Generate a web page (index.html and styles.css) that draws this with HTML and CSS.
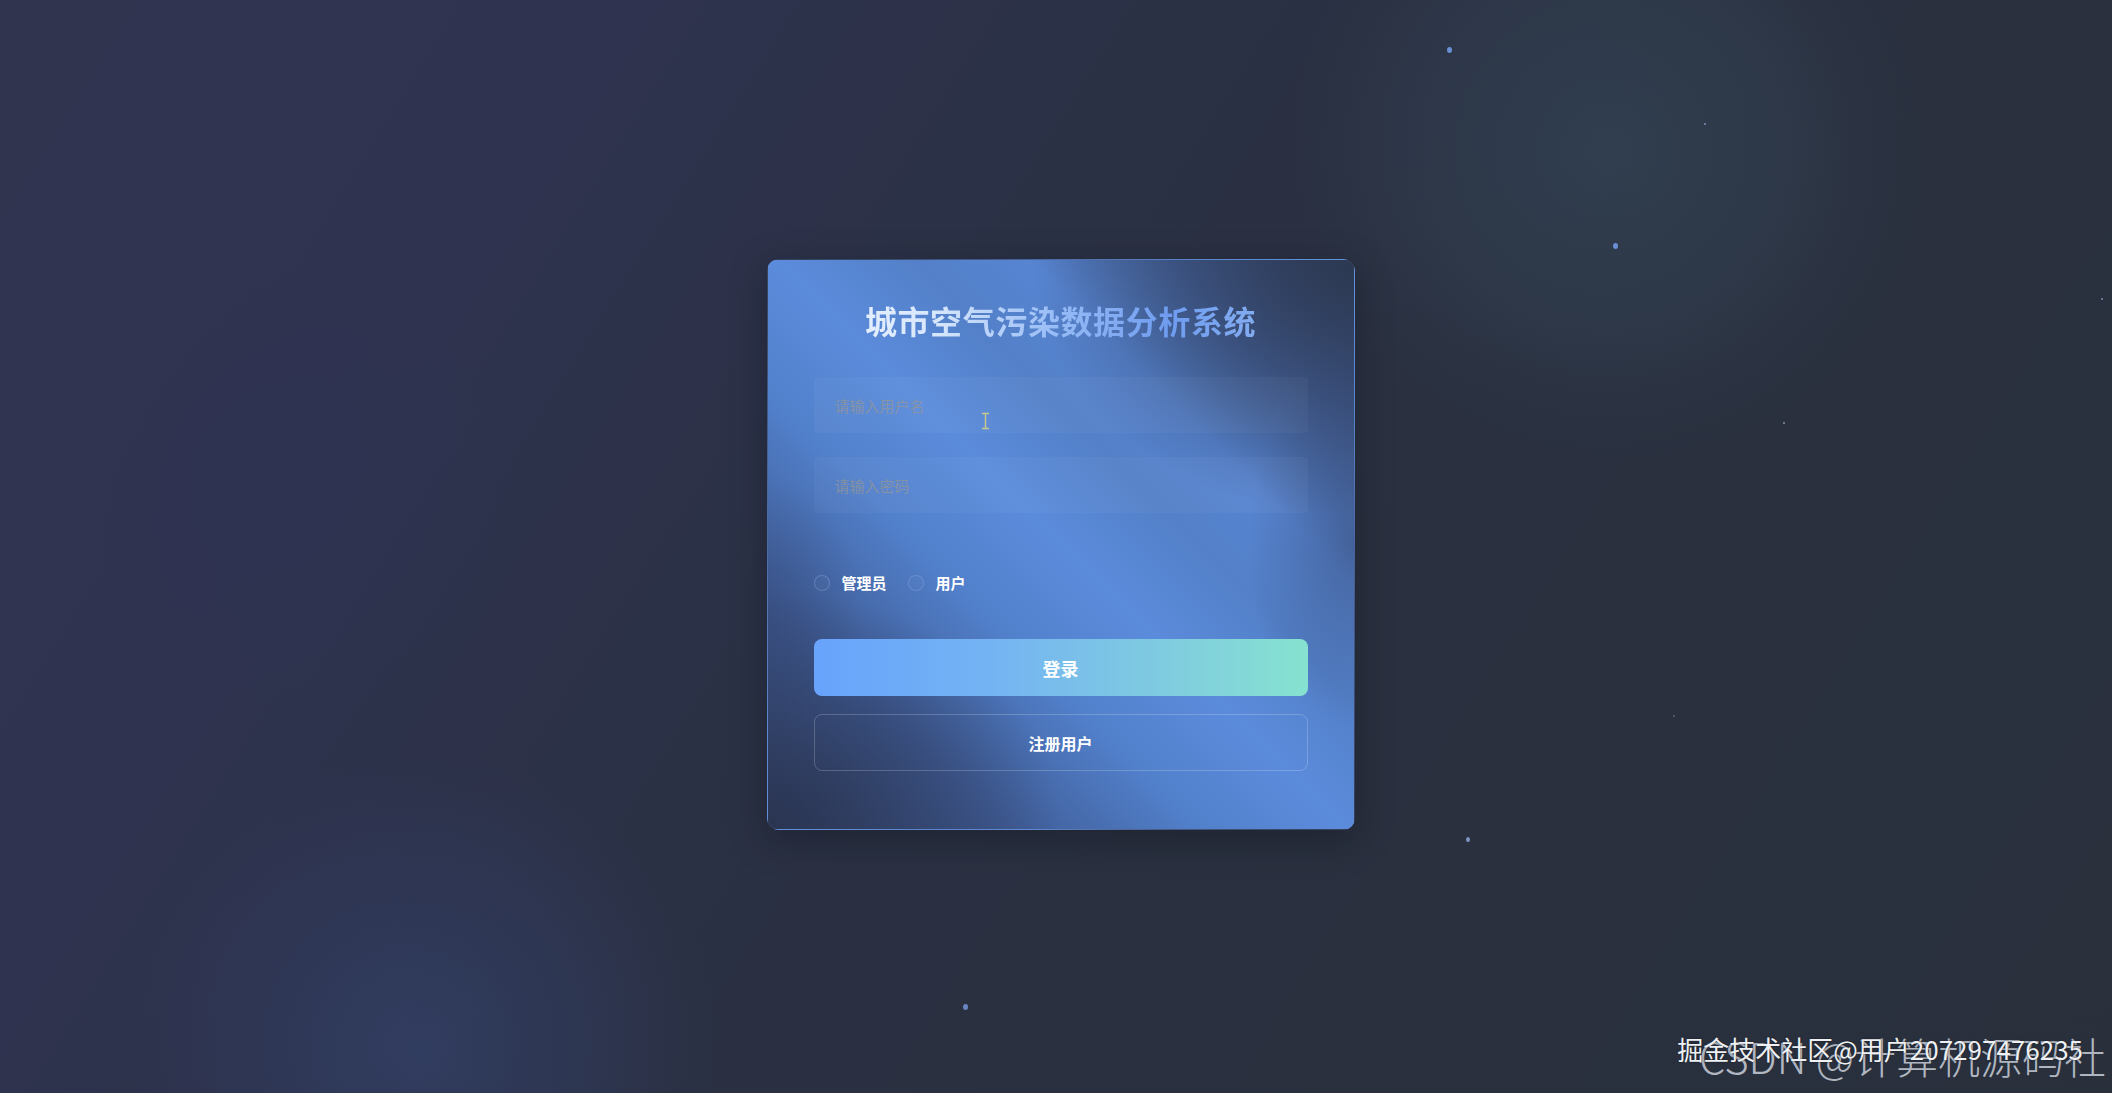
FILE: index.html
```html
<!DOCTYPE html>
<html lang="zh-CN">
<head>
<meta charset="utf-8">
<title>城市空气污染数据分析系统</title>
<link rel="stylesheet" href="styles.css">
</head>
<body>
<div class="particles">
  <span class="dot d1"></span>
  <span class="dot d2"></span>
  <span class="dot d3"></span>
  <span class="dot d4"></span>
  <span class="dot d5"></span>
  <span class="dot d6"></span>
  <span class="dot d7"></span>
  <span class="dot d8"></span>
</div>

<main class="card">
  <h1 class="title">城市空气污染数据分析系统</h1>
  <form class="form">
    <div class="field"><input class="input" type="text" placeholder="请输入用户名"></div>
    <div class="field field-second"><input class="input" type="password" placeholder="请输入密码"></div>
    <div class="roles">
      <label class="role"><span class="radio"></span><span class="role-text">管理员</span></label>
      <label class="role"><span class="radio"></span><span class="role-text">用户</span></label>
    </div>
    <button type="button" class="btn btn-login">登录</button>
    <button type="button" class="btn btn-register">注册用户</button>
  </form>
  <svg class="ibeam" width="9" height="18" viewBox="0 0 9 18">
    <path d="M1 1.5h7M1 16.5h7M4.5 1.5v15" stroke="#c9c98e" stroke-width="1.4" fill="none"/>
  </svg>
</main>

<div class="watermark">
  <span class="wm-csdn">CSDN @计算机源码社</span>
  <span class="wm-juejin">掘金技术社区@用户207297476235</span>
</div>
</body>
</html>
```
FILE: styles.css
```css
* { box-sizing: border-box; }

html, body {
  margin: 0;
  height: 100%;
}

body {
  min-height: 100vh;
  overflow: hidden;
  display: flex;
  align-items: center;
  justify-content: center;
  position: relative;
  font-family: "Noto Sans CJK SC", "Noto Sans", sans-serif;
  background:
    radial-gradient(circle at 1610px 150px, rgba(62, 92, 112, 0.32) 0, rgba(58, 84, 104, 0.22) 170px, rgba(50, 70, 90, 0.08) 270px, transparent 320px),
    radial-gradient(circle at 420px 1050px, rgba(56, 76, 130, 0.42) 0, rgba(52, 68, 118, 0.22) 180px, rgba(50, 60, 100, 0.08) 260px, transparent 300px),
    radial-gradient(circle at 300px 490px, rgba(44, 50, 84, 0.4) 0, rgba(44, 50, 84, 0.15) 150px, transparent 220px),
    linear-gradient(122deg, #30344f 0%, #2f3350 20%, #2b3145 42%, #2a303f 62%, #29303c 100%);
}

.particles {
  position: absolute;
  inset: 0;
  pointer-events: none;
}

.dot {
  position: absolute;
  border-radius: 50%;
  background: #6b8fd6;
}
.d1 { left: 1447px; top: 47px; width: 5px; height: 6px; }
.d2 { left: 1704px; top: 123px; width: 2px; height: 2px; background: #7d8fb0; }
.d3 { left: 1613px; top: 243px; width: 5px; height: 6px; }
.d4 { left: 2101px; top: 298px; width: 2px; height: 2px; background: #7d8fb0; }
.d5 { left: 1783px; top: 422px; width: 2px; height: 2px; background: #7d8fb0; }
.d6 { left: 1673px; top: 715px; width: 2px; height: 2px; background: #5b6580; }
.d7 { left: 1466px; top: 837px; width: 4px; height: 5px; background: #7e94c4; }
.d8 { left: 963px; top: 1004px; width: 5px; height: 6px; background: #6a85c2; }

.card {
  position: relative;
  width: 588px;
  height: 571px;
  margin-left: 9px;
  margin-top: -4px;
  padding: 39px 46px 58px 46px;
  border-radius: 12px;
  border: 1px solid rgba(255, 255, 255, 0.05);
  box-shadow: 0 10px 36px rgba(10, 14, 24, 0.35);
  background:
    radial-gradient(ellipse 55% 45% at 100% 0%, rgba(44, 56, 80, 0.95) 0%, rgba(46, 60, 90, 0.55) 50%, transparent 100%),
    radial-gradient(ellipse 50% 42% at 0% 100%, rgba(42, 52, 80, 0.95) 0%, rgba(44, 56, 88, 0.5) 50%, transparent 100%),
    radial-gradient(ellipse 18% 32% at 100% 50%, rgba(52, 70, 110, 0.5), transparent 100%),
    radial-gradient(ellipse 16% 24% at 0% 62%, rgba(52, 72, 118, 0.45), transparent 100%),
    linear-gradient(45deg, #34446c 0%, #3f5b95 20%, #5281cc 38%, #5b8bdb 50%, #5380c8 62%, #5785d2 72%, #46649f 86%, #34466e 100%);
}

.title {
  margin: 0;
  text-align: center;
  font-size: 32px;
  line-height: 42px;
  font-weight: 700;
  letter-spacing: 0.6px;
  background: linear-gradient(90deg, #eef5ff 0%, #d6e6fc 25%, #95baf5 50%, #6f9cf0 72%, #8fb6f0 100%);
  -webkit-background-clip: text;
  background-clip: text;
  color: transparent;
}

.form {
  display: flex;
  flex-direction: column;
  margin-top: 36px;
}

.field { height: 56px; }
.field-second { margin-top: 24px; }

.input {
  width: 100%;
  height: 56px;
  border: none;
  outline: none;
  border-radius: 4px;
  padding: 0 21px;
  background: rgba(255, 255, 255, 0.035);
  color: #fff;
  font-family: inherit;
  font-size: 15px;
}
.input::placeholder { color: rgba(150, 150, 150, 0.75); }

.roles {
  display: flex;
  align-items: center;
  gap: 21px;
  height: 20px;
  margin-top: 60px;
}

.role {
  display: flex;
  align-items: center;
  gap: 12px;
}

.radio {
  width: 16px;
  height: 16px;
  border-radius: 50%;
  border: 1px solid rgba(150, 175, 225, 0.35);
  background: rgba(255, 255, 255, 0.02);
}

.role-text {
  color: #fff;
  font-size: 15px;
  font-weight: 700;
  line-height: 20px;
}

.btn {
  width: 100%;
  height: 57px;
  border-radius: 8px;
  font-family: inherit;
  font-weight: 700;
  color: #fff;
  cursor: pointer;
}

.btn-login {
  margin-top: 46px;
  border: none;
  font-size: 18px;
  background: linear-gradient(90deg, #68a3fc 0%, #74b3f3 35%, #7fcbe0 70%, #86e2d0 100%);
}

.btn-register {
  margin-top: 18px;
  font-size: 16px;
  border: 1px solid rgba(255, 255, 255, 0.2);
  background: transparent;
}

.ibeam {
  position: absolute;
  left: 213px;
  top: 152px;
}

.watermark {
  position: absolute;
  right: 0;
  bottom: 0;
  width: 460px;
  height: 74px;
  pointer-events: none;
}

.wm-csdn {
  position: absolute;
  right: 6px;
  top: 14px;
  font-size: 42px;
  line-height: 46px;
  font-weight: 300;
  color: rgba(215, 220, 228, 0.8);
  white-space: nowrap;
}

.wm-juejin {
  position: absolute;
  right: 29px;
  top: 14px;
  font-size: 26px;
  line-height: 32px;
  color: #eef0f3;
  white-space: nowrap;
  text-shadow: 0 0 2px rgba(20, 24, 32, 0.9);
}
```
